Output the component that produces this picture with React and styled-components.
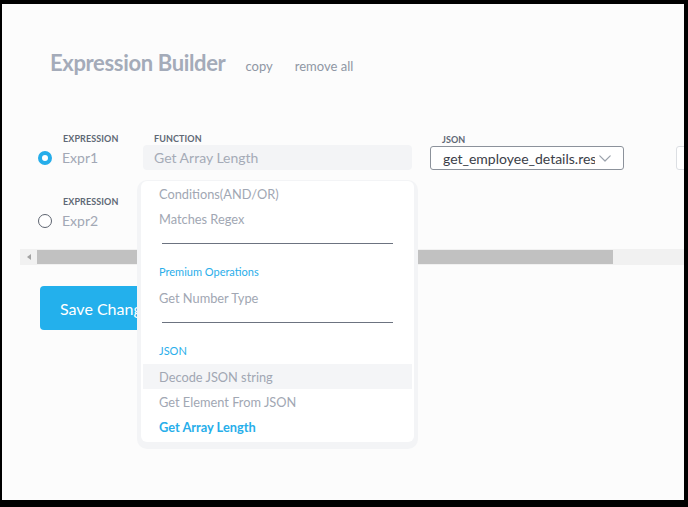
import React from "react";
import styled, { createGlobalStyle } from "styled-components";

const GlobalStyle = createGlobalStyle`
  html, body {
    margin: 0;
    padding: 0;
    background: #000;
  }
  body {
    font-family: Lato, "Open Sans", sans-serif;
  }
`;

const menuGroups = [
  {
    heading: null,
    items: ["Conditions(AND/OR)", "Matches Regex"],
  },
  {
    heading: "Premium Operations",
    items: ["Get Number Type"],
  },
  {
    heading: "JSON",
    items: ["Decode JSON string", "Get Element From JSON", "Get Array Length"],
  },
];

// thin, wide caret used by the select
const Caret = () => (
  <svg width="12" height="7" viewBox="0 0 12 7" fill="none">
    <polyline
      points="0.8,0.8 6,6 11.2,0.8"
      stroke="#9aa1ab"
      strokeWidth="1.2"
      strokeLinecap="round"
      strokeLinejoin="round"
    />
  </svg>
);

export default function App() {
  const selected = "Get Array Length";
  const hovered = "Decode JSON string";

  return (
    <>
      <GlobalStyle />
      <Screen>
        <Header>
          <Title>Expression Builder</Title>
          <HeaderLink>copy</HeaderLink>
          <HeaderLink $wide>remove all</HeaderLink>
        </Header>

        <Rows>
          <ExprRow>
            <ExprCell>
              <FieldLabel>Expression</FieldLabel>
              <RadioLine>
                <Radio checked />
                <ExprName>Expr1</ExprName>
              </RadioLine>
            </ExprCell>
            <FunctionCell>
              <FieldLabel>Function</FieldLabel>
              <FunctionInput>Get Array Length</FunctionInput>
            </FunctionCell>
            <JsonCell>
              <FieldLabel>JSON</FieldLabel>
              <Select>
                <SelectValue>get_employee_details.response</SelectValue>
                <Caret />
              </Select>
            </JsonCell>
            <ExtraCell>
              <FieldLabel>&nbsp;</FieldLabel>
              <GhostInput />
            </ExtraCell>
          </ExprRow>

          <ExprRow>
            <ExprCell>
              <FieldLabel>Expression</FieldLabel>
              <RadioLine>
                <Radio />
                <ExprName>Expr2</ExprName>
              </RadioLine>
            </ExprCell>
          </ExprRow>
        </Rows>

        <ScrollTrack>
          <ScrollArrow />
          <ScrollThumb />
        </ScrollTrack>

        <Footer>
          <SaveButton>Save Changes</SaveButton>
        </Footer>

        <Menu>
          {menuGroups.map((group, gi) => (
            <React.Fragment key={gi}>
              {gi > 0 && <Divider />}
              {group.heading && <MenuHeading>{group.heading}</MenuHeading>}
              {group.items.map((item) => (
                <MenuItem
                  key={item}
                  $active={item === selected}
                  $hover={item === hovered}
                >
                  {item}
                </MenuItem>
              ))}
            </React.Fragment>
          ))}
        </Menu>
      </Screen>
    </>
  );
}

const Screen = styled.div`
  position: relative;
  margin: 4px 4px 0 2px;
  height: 496px;
  background: #fcfcfc;
  overflow: hidden;
`;

const Header = styled.div`
  display: flex;
  align-items: baseline;
  gap: 20px;
  padding: 46px 0 0 48px;
`;

const Title = styled.h1`
  margin: 0;
  font-size: 22px;
  line-height: 26px;
  font-weight: 700;
  letter-spacing: -0.35px;
  color: #a4abb9;
`;

const HeaderLink = styled.span`
  margin-left: ${(p) => (p.$wide ? "2px" : "0")};
  font-size: 13px;
  color: #8f97a4;
  cursor: pointer;
`;

const Rows = styled.div`
  display: flex;
  flex-direction: column;
  gap: 27px;
  padding: 58px 0 0 35px;
`;

const ExprRow = styled.div`
  display: grid;
  grid-template-columns: 106px 287px 246px 40px;
  align-items: end;
`;

const ExprCell = styled.div`
  display: flex;
  flex-direction: column;
  padding-left: 25px;
`;

const FieldLabel = styled.div`
  font-size: 9px;
  line-height: 10px;
  font-weight: 700;
  letter-spacing: 0.1px;
  text-transform: uppercase;
  color: #606875;
  margin-bottom: 1px;
  padding-left: 1px;
`;

const RadioLine = styled.div`
  position: relative;
  height: 25px;
  display: flex;
  align-items: center;
`;

const Radio = styled.span`
  position: absolute;
  left: -24px;
  width: 14px;
  height: 14px;
  box-sizing: border-box;
  border-radius: 50%;
  border: ${(p) => (p.checked ? "4.5px solid #25adea" : "1.3px solid #5e6470")};
  background: #fff;
`;

const ExprName = styled.span`
  font-size: 14px;
  color: #a2a8b5;
`;

const FunctionCell = styled.div`
  display: flex;
  flex-direction: column;
  padding-right: 18px;

  ${FieldLabel} {
    padding-left: 11px;
  }
`;

const FunctionInput = styled.div`
  height: 25px;
  display: flex;
  align-items: center;
  padding-left: 11px;
  border-radius: 4px;
  background: #f3f4f6;
  font-size: 14px;
  color: #a5abb7;
`;

const JsonCell = styled.div`
  display: flex;
  flex-direction: column;
  padding-right: 52px;

  ${FieldLabel} {
    padding-left: 12px;
  }
`;

const Select = styled.div`
  height: 24px;
  box-sizing: border-box;
  display: flex;
  align-items: center;
  gap: 4px;
  padding: 0 12px 0 12px;
  border: 1px solid #8c929b;
  border-radius: 3px;
  background: #fff;
`;

const SelectValue = styled.span`
  flex: 1;
  overflow: hidden;
  white-space: nowrap;
  font-size: 14px;
  color: #3b4048;
`;

const ExtraCell = styled.div`
  display: flex;
  flex-direction: column;
`;

const GhostInput = styled.div`
  height: 24px;
  box-sizing: border-box;
  border: 1px solid #dcdfe3;
  border-radius: 3px;
  background: #fff;
`;

const ScrollTrack = styled.div`
  display: flex;
  align-items: center;
  height: 16px;
  margin: 16px 0 0 18px;
  background: #f1f1f1;
`;

const ScrollArrow = styled.span`
  width: 17px;
  display: flex;
  justify-content: center;

  &::before {
    content: "";
    border-top: 3.5px solid transparent;
    border-bottom: 3.5px solid transparent;
    border-right: 4px solid #a3a3a3;
  }
`;

const ScrollThumb = styled.span`
  width: 576px;
  height: 14px;
  background: #c1c1c1;
`;

const Footer = styled.div`
  padding: 21px 0 0 38px;
`;

const SaveButton = styled.button`
  height: 44px;
  width: 150px;
  padding: 0 0 0 20px;
  text-align: left;
  border: none;
  border-radius: 4px;
  background: #23b0ec;
  color: #fff;
  font-family: Lato, sans-serif;
  font-size: 16px;
`;

const Menu = styled.div`
  position: absolute;
  left: 139px;
  top: 177px;
  width: 273px;
  height: 261px;
  box-sizing: border-box;
  border-radius: 6px;
  background: #fff;
  box-shadow: 0 3px 0 4px #f3f4f6;
  display: flex;
  flex-direction: column;
`;

const MenuItem = styled.div`
  height: 25px;
  flex-shrink: 0;
  display: flex;
  align-items: center;
  padding-left: 16px;
  margin: 0 2px;
  font-size: 12.8px;
  font-weight: ${(p) => (p.$active ? 700 : 400)};
  color: ${(p) => (p.$active ? "#27aeea" : "#a1a7b3")};
  background: ${(p) => (p.$hover ? "#f4f5f7" : "transparent")};
`;

const MenuHeading = styled.div`
  height: 27px;
  flex-shrink: 0;
  margin-top: 14px;
  display: flex;
  align-items: center;
  padding-left: 18px;
  font-size: 11px;
  color: #2aaeea;
`;

const Divider = styled.div`
  height: 1px;
  flex-shrink: 0;
  margin: 12px 21px 0 21px;
  background: #6c7380;
`;
